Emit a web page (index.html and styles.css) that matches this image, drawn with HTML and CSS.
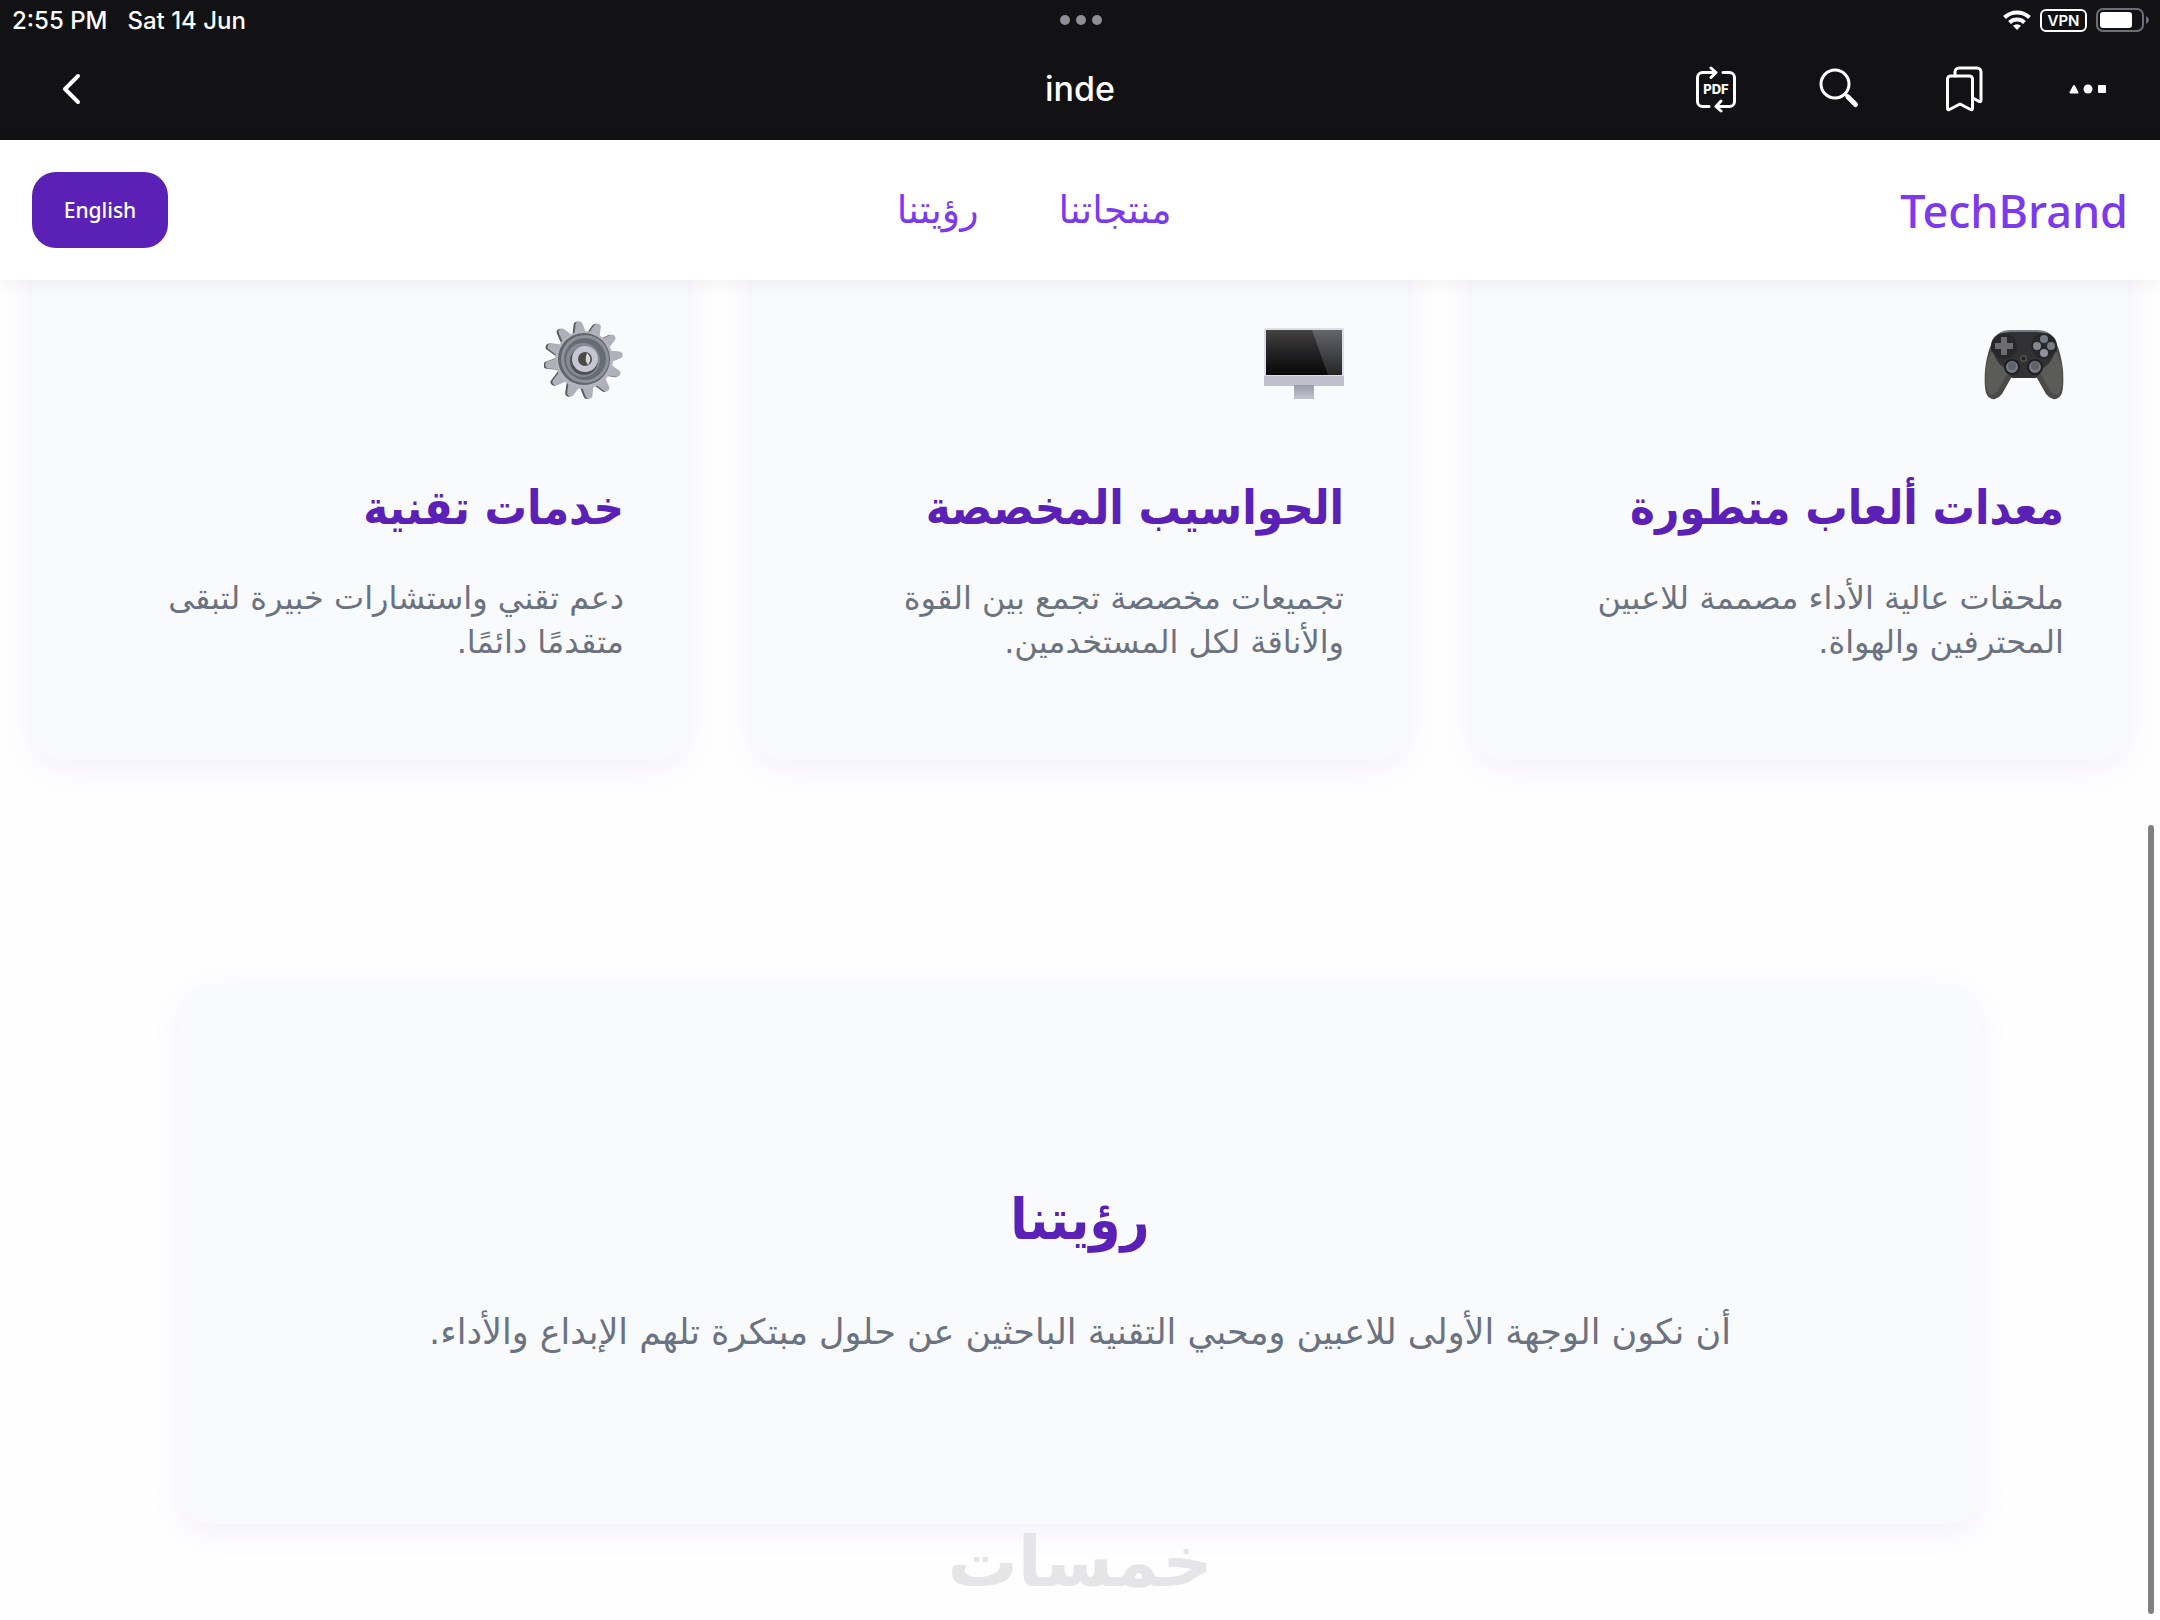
FILE: index.html
```html
<!DOCTYPE html>
<html lang="ar">
<head>
    <meta charset="UTF-8">
    <meta name="viewport" content="width=device-width, initial-scale=1.0">
    <title>inde</title>
    <link rel="stylesheet" href="styles.css">
</head>
<body>
    <div class="chrome" lang="en">
        <div class="status-bar">
            <div class="status-left">
                <span>2:55 PM</span>
                <span>Sat 14 Jun</span>
            </div>
            <div class="dots"><i></i><i></i><i></i></div>
            <div class="status-right">
                <svg width="28" height="20" viewBox="0 0 28 20" fill="none" stroke="#fff" stroke-width="4">
                    <path d="M1.5 7.5a18 18 0 0 1 25 0"/>
                    <path d="M6.5 12.5a11 11 0 0 1 15 0"/>
                    <path d="M14 20l-4-4.200a6 6 0 0 1 8 0z" fill="#fff" stroke="none"/>
                </svg>
                <span class="vpn">VPN</span>
                <svg width="54" height="24" viewBox="0 0 54 24">
                    <rect x="1" y="1" width="46" height="22" rx="6" fill="none" stroke="#6b6f78" stroke-width="2"/>
                    <rect x="4" y="4" width="32" height="16" rx="3" fill="#fff"/>
                    <path d="M50 8q3 1.500 3 4t-3 4z" fill="#6b6f78"/>
                </svg>
            </div>
        </div>
        <div class="toolbar">
            <button type="button" class="tool" aria-label="Back">
                <svg width="48" height="48" viewBox="0 0 48 48"><path d="M30 11L17 24l13 13" stroke-width="4"/></svg>
            </button>
            <h1>inde</h1>
            <div class="tools">
                <button type="button" class="tool" aria-label="Convert to PDF">
                    <svg width="48" height="48" viewBox="0 0 48 48">
                        <path d="M24 7.500H10.500a5 5 0 0 0-5 5v24a5 5 0 0 0 5 5H17M19 3l5 4.500-5 5M31 7.500h6.500a5 5 0 0 1 5 5v24a5 5 0 0 1-5 5H24M29 36l-5 5.500 5 4.500"/>
                        <text x="24" y="29" text-anchor="middle">PDF</text>
                    </svg>
                </button>
                <button type="button" class="tool" aria-label="Search">
                    <svg width="48" height="48" viewBox="0 0 48 48">
                        <circle cx="19" cy="19" r="14"/>
                        <path d="M29 29l3 3"/>
                        <path d="M32 32l7.500 7.500" stroke-width="5"/>
                    </svg>
                </button>
                <button type="button" class="tool" aria-label="Bookmarks">
                    <svg width="48" height="48" viewBox="0 0 48 48">
                        <path d="M7.500 14a3 3 0 0 1 3-3h19a3 3 0 0 1 3 3v29.500q0 2-2 1L20 39l-10.500 5.500q-2 1-2-1z"/>
                        <path d="M15 11V7a4 4 0 0 1 4-4h18a4 4 0 0 1 4 4v28q0 2.500-2 1.500l-6-3.500"/>
                    </svg>
                </button>
                <button type="button" class="tool" aria-label="More">
                    <svg width="48" height="48" viewBox="0 0 48 48">
                        <path d="M10 21l3.500 6.500h-7z" fill="#fff" stroke-width="2"/>
                        <circle cx="24" cy="24" r="4.500" fill="#fff" stroke="none"/>
                        <rect x="34" y="20" width="8" height="8" rx="1" fill="#fff" stroke="none"/>
                    </svg>
                </button>
            </div>
        </div>
    </div>

    <div class="site" dir="rtl">
        <header class="site-header">
            <a href="#" class="logo" dir="ltr">TechBrand</a>
            <nav>
                <a href="#products">منتجاتنا</a>
                <a href="#vision">رؤيتنا</a>
            </nav>
            <button type="button" class="lang-btn">English</button>
        </header>

        <main>
            <section class="products" id="products">
                <article class="card">
                    <svg class="card-icon" viewBox="0 0 80 80" aria-hidden="true">
                        <path d="M14 14q5-3 12-3h28q7 0 12 3 10 10 13 36 1 15-1 23-3 7-9 6-4-1-7-5L53 58H27L18 74q-3 4-7 5-6 1-9-6-2-8-1-23Q4 24 14 14z" fill="#4b4a49"/>
                        <path d="M14 15q5-3 12-3h28q7 0 12 3l7 13q0 12-12 18-6 13-14 12h-14q-8 1-14-12Q7 40 7 28z" fill="#323234"/>
                        <path d="M2 49q2-14 7-19 3 15 16 21l-12 21q-6 5-9 0-3-6-2-23zM78 49q-2-14-7-19-3 15-16 21l12 21q6 5 9 0 3-6 2-23z" fill="#5b5b58"/>
                        <path d="M15 14q5-3 11-3h28q6 0 11 3" fill="none" stroke="#777a82" stroke-width="2"/>
                        <circle cx="20" cy="26" r="13" fill="#28282a"/>
                        <circle cx="60" cy="26" r="13" fill="#28282a"/>
                        <path d="M17 17h6v6h6v6h-6v6h-6v-6h-6v-6h6z" fill="#6d6d6e"/>
                        <circle cx="60" cy="19" r="4" fill="#777a80"/>
                        <circle cx="53" cy="26" r="4" fill="#85878f"/>
                        <circle cx="67" cy="26" r="4" fill="#777a80"/>
                        <circle cx="60" cy="33" r="4" fill="#9092a0"/>
                        <circle cx="28" cy="47" r="7" fill="#777b84" stroke="#1f1f21" stroke-width="2"/>
                        <circle cx="51" cy="47" r="7" fill="#777b84" stroke="#1f1f21" stroke-width="2"/>
                        <circle cx="28" cy="46" r="4" fill="#5e6269"/>
                        <circle cx="51" cy="46" r="4" fill="#5e6269"/>
                        <rect x="37" y="36" width="5" height="5" rx="1" fill="#222" stroke="#666"/>
                    </svg>
                    <h3>معدات ألعاب متطورة</h3>
                    <p>ملحقات عالية الأداء مصممة للاعبين المحترفين والهواة.</p>
                </article>
                <article class="card">
                    <svg class="card-icon" viewBox="0 0 80 80" aria-hidden="true">
                        <defs>
                            <linearGradient id="screen" x2="0" y2="1">
                                <stop offset="0" stop-color="#444340"/>
                                <stop offset=".5" stop-color="#222224"/>
                                <stop offset="1" stop-color="#080808"/>
                            </linearGradient>
                            <linearGradient id="glare" x2="0" y2="1">
                                <stop offset="0" stop-color="#64666a"/>
                                <stop offset="1" stop-color="#252526"/>
                            </linearGradient>
                            <linearGradient id="stand" x2="0" y2="1">
                                <stop offset="0" stop-color="#9a9ca4"/>
                                <stop offset="1" stop-color="#c4c4d4"/>
                            </linearGradient>
                        </defs>
                        <rect x="0" y="8" width="80" height="50" rx="2" fill="#dcdde8"/>
                        <rect x="2" y="10" width="76" height="45" fill="url(#screen)"/>
                        <path d="M48 10h30v45H64z" fill="url(#glare)"/>
                        <rect x="0" y="56" width="80" height="10" rx="1" fill="#bfc0cd"/>
                        <rect x="30" y="65" width="20" height="14" fill="url(#stand)"/>
                    </svg>
                    <h3>الحواسيب المخصصة</h3>
                    <p>تجميعات مخصصة تجمع بين القوة والأناقة لكل المستخدمين.</p>
                </article>
                <article class="card">
                    <svg class="card-icon" viewBox="0 0 80 80" aria-hidden="true">
                        <defs>
                            <path id="tooth" d="M34 14l2.500-10q.500-3 3.500-3t3.500 3L46 14z"/>
                            <g id="teeth">
                                <use href="#tooth"/>
                                <use href="#tooth" transform="rotate(30 40 40)"/>
                                <use href="#tooth" transform="rotate(60 40 40)"/>
                                <use href="#tooth" transform="rotate(90 40 40)"/>
                                <use href="#tooth" transform="rotate(120 40 40)"/>
                                <use href="#tooth" transform="rotate(150 40 40)"/>
                                <use href="#tooth" transform="rotate(180 40 40)"/>
                                <use href="#tooth" transform="rotate(210 40 40)"/>
                                <use href="#tooth" transform="rotate(240 40 40)"/>
                                <use href="#tooth" transform="rotate(270 40 40)"/>
                                <use href="#tooth" transform="rotate(300 40 40)"/>
                                <use href="#tooth" transform="rotate(330 40 40)"/>
                            </g>
                        </defs>
                        <g transform="rotate(-8 40 40)">
                            <use href="#teeth" x="-2" fill="#5c5c60"/>
                            <use href="#teeth" fill="#b0b0ba"/>
                        </g>
                        <circle cx="40" cy="40" r="29" fill="#b4b4be"/>
                        <circle cx="40" cy="39" r="26" fill="#62666c"/>
                        <circle cx="41" cy="39" r="24" fill="#8d929a"/>
                        <circle cx="41" cy="39" r="21" fill="#676c74"/>
                        <circle cx="39" cy="40" r="17" fill="#858b95"/>
                        <circle cx="40" cy="41" r="14" fill="#4e5054"/>
                        <circle cx="41" cy="39" r="13" fill="#c6c6d2"/>
                        <circle cx="41" cy="39" r="7" fill="#4c4b49"/>
                        <path d="M43 33q6 5 1 12-4-5-1-12z" fill="#d8d8de"/>
                    </svg>
                    <h3>خدمات تقنية</h3>
                    <p>دعم تقني واستشارات خبيرة لتبقى متقدمًا دائمًا.</p>
                </article>
            </section>

            <section class="vision" id="vision">
                <h2>رؤيتنا</h2>
                <p>أن نكون الوجهة الأولى للاعبين ومحبي التقنية الباحثين عن حلول مبتكرة تلهم الإبداع والأداء.</p>
            </section>
        </main>

        <footer class="watermark">خمسات</footer>
    </div>

    <div class="scroll-thumb"></div>
</body>
</html>
```

FILE: styles.css
```css
* {
    box-sizing: border-box;
}

body {
    margin: 0;
    background: #fefefe;
    font-family: "DejaVu Sans", sans-serif;
    color: #6b7280;
}

button {
    border: none;
    padding: 0;
    cursor: pointer;
}

a {
    text-decoration: none;
}

h1, h2, h3, p {
    margin: 0;
}

/* App bar */
.chrome {
    background: #121214;
    color: #fff;
    font-family: Inter, sans-serif;
    height: 140px;
}

.status-bar {
    display: grid;
    grid-template-columns: 1fr auto 1fr;
    align-items: center;
    height: 40px;
    padding: 0 10px 0 12px;
    font-size: 24px;
    font-weight: 500;
}

.status-left {
    display: flex;
    gap: 20px;
}

.dots {
    display: flex;
    gap: 6px;
}

.dots i {
    width: 10px;
    height: 10px;
    border-radius: 50%;
    background: #8e8e96;
}

.status-right {
    display: flex;
    justify-content: flex-end;
    align-items: center;
    gap: 9px;
}

.vpn {
    width: 47px;
    height: 23px;
    border: 2px solid #fff;
    border-radius: 6px;
    font-size: 15px;
    font-weight: 600;
    line-height: 19px;
    text-align: center;
}

.toolbar {
    display: grid;
    grid-template-columns: 1fr auto 1fr;
    align-items: center;
    height: 98px;
    padding: 0 48px;
}

.toolbar h1 {
    font-size: 34px;
    font-weight: 500;
    line-height: 44px;
}

.tools {
    display: flex;
    justify-content: flex-end;
    gap: 76px;
}

.tool {
    width: 48px;
    height: 48px;
    background: none;
}

.tool svg {
    display: block;
    fill: none;
    stroke: #fff;
    stroke-width: 3;
    stroke-linecap: round;
    stroke-linejoin: round;
}

.tool text {
    fill: #fff;
    stroke: none;
    font: 800 13px Inter, sans-serif;
}

/* Site */
.site-header {
    position: relative;
    z-index: 1;
    display: flex;
    justify-content: space-between;
    align-items: center;
    height: 140px;
    padding: 0 32px;
    background: #fff;
    box-shadow: 0 4px 16px rgba(0, 0, 0, 0.05);
}

.logo {
    font-family: "Noto Sans", sans-serif;
    font-size: 45px;
    font-weight: 500;
    color: #7c3aed;
}

nav {
    display: flex;
    gap: 80px;
}

nav a {
    font-size: 38px;
    color: #7c3aed;
}

.lang-btn {
    width: 136px;
    height: 76px;
    border-radius: 24px;
    background: #5b21b6;
    color: #fff;
    font-family: "Noto Sans", sans-serif;
    font-size: 21px;
    font-weight: 500;
}

main {
    padding: 0 32px;
}

.products {
    display: grid;
    grid-template-columns: repeat(3, 1fr);
    gap: 64px;
    margin-top: -64px;
}

.card {
    padding: 104px 64px 96px;
    border-radius: 32px;
    background: #f9fafc;
    box-shadow: 0 8px 32px rgba(124, 58, 237, 0.08);
}

.card-icon {
    display: block;
    width: 80px;
    height: 80px;
}

.card h3,
.vision h2 {
    font-family: "DejaVu Sans Condensed", "DejaVu Sans", sans-serif;
    font-weight: 700;
    color: #5b21b6;
}

.card h3 {
    margin: 76px 0 36px;
    font-size: 47px;
    line-height: 64px;
}

.card p {
    font-size: 32px;
    line-height: 44px;
}

.vision {
    max-width: 1800px;
    margin: 224px auto 0;
    padding: 188px 64px 164px;
    border-radius: 32px;
    background: #f9fafc;
    box-shadow: 0 8px 32px rgba(124, 58, 237, 0.08);
    text-align: center;
}

.vision h2 {
    margin-bottom: 36px;
    font-size: 56px;
    line-height: 96px;
}

.vision p {
    font-size: 35px;
    line-height: 56px;
}

.watermark {
    height: 96px;
    font-size: 70px;
    font-weight: 700;
    line-height: 76px;
    text-align: center;
    color: #e5e5e7;
}

.scroll-thumb {
    position: absolute;
    top: 825px;
    right: 6px;
    width: 6px;
    height: 789px;
    border-radius: 3px;
    background: #7f7f84;
}
```
